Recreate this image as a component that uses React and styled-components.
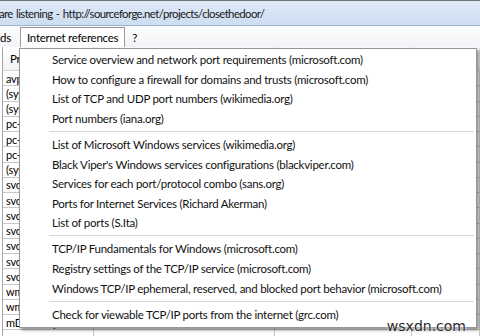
import React from 'react'
import styled, { createGlobalStyle } from 'styled-components'

const GlobalStyle = createGlobalStyle`
html, body {
  margin: 0;
  padding: 0;
  background: #ffffff;
}
body {
  font-family: Lato, "Open Sans", sans-serif;
  font-size: 11.5px;
  letter-spacing: -0.25px;
  color: #000;
}
`

const Window = styled.div`
position: relative;
width: 480px;
height: 336px;
overflow: hidden;
background: #ffffff;
`

const TitleBar = styled.div`
height: 26px;
border-top: 1px solid #6f7479;
border-bottom: 1px solid #9fb2c8;
background: linear-gradient(#dce9f7, #cddef1);
display: flex;
align-items: center;
padding-top: 1px;
box-sizing: border-box;
`

const TitleText = styled.div`
margin-left: -1px;
font-size: 11.4px;
letter-spacing: -0.6px;
word-spacing: 1px;
color: #1a1a1a;
white-space: nowrap;
`

const MenuBar = styled.div`
height: 20px;
border-top: 1px solid #f4f7fb;
background: linear-gradient(#fcfdfe, #f1f3f6);
display: flex;
align-items: stretch;
`

const MenuTitle = styled.div`
display: flex;
align-items: center;
padding: ${p => (p.$cut ? '0 8px 0 0' : '0 6px')};
margin-left: ${p => (p.$cut ? '-1px' : '0')};
border: 1px solid ${p => (p.$active ? '#9a9a9a' : 'transparent')};
border-bottom: none;
background: ${p => (p.$active ? '#ffffff' : 'transparent')};
white-space: nowrap;
`

const Table = styled.div`
margin-left: 2px;
border-left: 1px solid #a5a5a5;
`

const HeaderRow = styled.div`
display: grid;
grid-template-columns: 91px 181px 137px 1fr;
height: 23px;
background: linear-gradient(#ffffff, #f2f3f5);
border-bottom: 1px solid #d5d5d5;
`

const HeaderCell = styled.div`
display: flex;
align-items: center;
padding-left: 7px;
border-right: 1px solid #e2e3e5;
white-space: nowrap;
overflow: hidden;
`

const Row = styled.div`
display: grid;
grid-template-columns: 91px 181px 137px 1fr;
height: 15.25px;
box-sizing: border-box;
border-bottom: 1px solid #c8c8c8;
`

const Cell = styled.div`
display: flex;
align-items: center;
padding-left: 3px;
border-right: 1px solid #c8c8c8;
white-space: nowrap;
overflow: hidden;
font-size: 11px;
`

const Dropdown = styled.div`
position: absolute;
left: 19px;
top: 48px;
width: 456px;
padding: 1px 0 3px;
background: #ffffff;
border: 1px solid #979797;
box-shadow: 2px 2px 3px rgba(0, 0, 0, 0.45);
`

const Item = styled.div`
height: 19.6px;
display: flex;
align-items: center;
padding-left: 32px;
white-space: nowrap;
color: #111;
`

const Separator = styled.div`
height: 6.4px;
display: flex;
align-items: center;
margin-left: 29px;
margin-right: 2px;
&::before {
  content: '';
  flex: 1;
  height: 1px;
  background: #d8d8d8;
  box-shadow: 0 1px 0 #ffffff;
}
`

const Watermark = styled.div`
position: absolute;
right: 14px;
bottom: 2px;
font-family: "DejaVu Sans", sans-serif;
font-size: 14px;
letter-spacing: 0;
color: #2a2a2a;
text-shadow: 0 0 2px #fff, 0 0 2px #fff;
`

const processes = [
  'avp.exe',
  '(system)',
  '(system)',
  'pc-agent.exe',
  'pc-agent.exe',
  'pc-agent.exe',
  '(system)',
  'svchost.exe',
  'svchost.exe',
  'svchost.exe',
  'svchost.exe',
  'svchost.exe',
  'svchost.exe',
  'svchost.exe',
  'wmpnetwk.exe',
  'wmpnetwk.exe',
  'mDNSResponder.exe',
  '',
]

const groups = [
  [
    'Service overview and network port requirements (microsoft.com)',
    'How to configure a firewall for domains and trusts (microsoft.com)',
    'List of TCP and UDP port numbers (wikimedia.org)',
    'Port numbers (iana.org)',
  ],
  [
    'List of Microsoft Windows services (wikimedia.org)',
    "Black Viper's Windows services configurations (blackviper.com)",
    'Services for each port/protocol combo (sans.org)',
    'Ports for Internet Services (Richard Akerman)',
    'List of ports (S.Ita)',
  ],
  [
    'TCP/IP Fundamentals for Windows (microsoft.com)',
    'Registry settings of the TCP/IP service (microsoft.com)',
    'Windows TCP/IP ephemeral, reserved, and blocked port behavior (microsoft.com)',
  ],
  ['Check for viewable TCP/IP ports from the internet (grc.com)'],
]

export default function App() {
  return (
    <Window>
      <GlobalStyle />
      <TitleBar>
        <TitleText>are listening - http://sourceforge.net/projects/closethedoor/</TitleText>
      </TitleBar>
      <MenuBar>
        <MenuTitle $cut>ds</MenuTitle>
        <MenuTitle $active>Internet references</MenuTitle>
        <MenuTitle>?</MenuTitle>
      </MenuBar>
      <Table>
        <HeaderRow>
          <HeaderCell>Process</HeaderCell>
          <HeaderCell />
          <HeaderCell />
          <HeaderCell />
        </HeaderRow>
        {processes.map((name, i) => (
          <Row key={i}>
            <Cell>{name}</Cell>
            <Cell />
            <Cell />
            <Cell />
          </Row>
        ))}
      </Table>
      <Dropdown>
        {groups.map((g, gi) => (
          <React.Fragment key={gi}>
            {gi > 0 && <Separator />}
            {g.map(label => (
              <Item key={label}>{label}</Item>
            ))}
          </React.Fragment>
        ))}
      </Dropdown>
      <Watermark>wsxdn.com</Watermark>
    </Window>
  )
}
